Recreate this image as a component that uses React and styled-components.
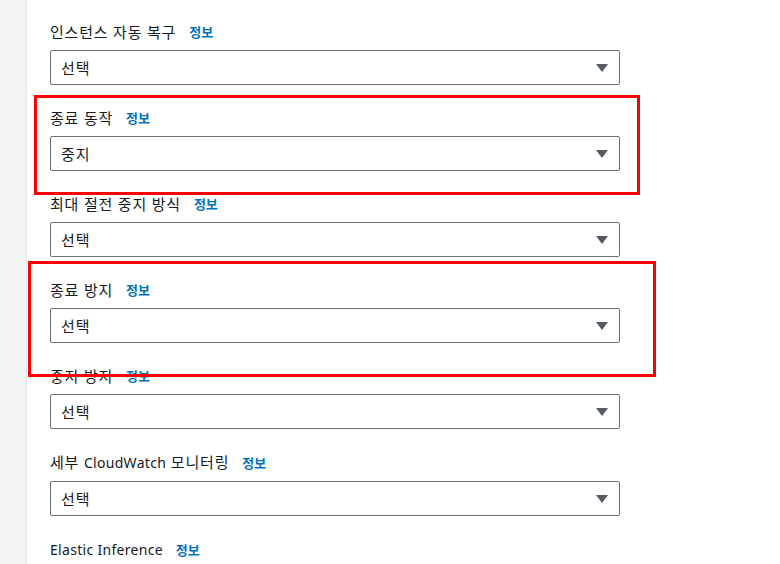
import React from 'react';
import styled, { createGlobalStyle } from 'styled-components';

const GlobalStyle = createGlobalStyle`
  html, body {
    margin: 0;
    padding: 0;
    background: #ffffff;
  }
  body {
    font-family: "Noto Sans", "Noto Sans CJK KR", sans-serif;
    color: #16191f;
  }
`;

const fields = [
  { id: 'recovery', label: '인스턴스 자동 복구', value: '선택' },
  { id: 'shutdown', label: '종료 동작', value: '중지' },
  { id: 'hibernate', label: '최대 절전 중지 방식', value: '선택' },
  { id: 'termination', label: '종료 방지', value: '선택' },
  { id: 'stop', label: '중지 방지', value: '선택' },
  {
    id: 'monitoring',
    label: (
      <>
        세부 <Latin>CloudWatch</Latin> 모니터링
      </>
    ),
    value: '선택',
  },
  { id: 'inference', label: <Latin>Elastic Inference</Latin>, value: null },
];

export default function App() {
  return (
    <>
      <GlobalStyle />
      <Page>
        <Sidebar />
        <Content>
          {fields.map((f) => (
            <Field key={f.id}>
              <Label>
                <span>{f.label}</span>
                <InfoLink>정보</InfoLink>
              </Label>
              {f.value && (
                <Select>
                  <SelectValue>{f.value}</SelectValue>
                  <Caret viewBox="0 0 12 8">
                    <path d="M0 0 L12 0 L6 8 Z" fill="#545b64" />
                  </Caret>
                </Select>
              )}
            </Field>
          ))}
          <Highlight $top={95} $left={34} $width={606} $height={100} />
          <Highlight $top={261} $left={28} $width={628} $height={116} />
        </Content>
      </Page>
    </>
  );
}

function Latin({ children }) {
  return <LatinText>{children}</LatinText>;
}

const Page = styled.div`
  display: flex;
  width: 780px;
  height: 564px;
  overflow: hidden;
`;

const Sidebar = styled.div`
  width: 26px;
  flex-shrink: 0;
  background: #f2f3f3;
  border-right: 1px solid #e4e6e6;
`;

const Content = styled.div`
  position: relative;
  flex: 1;
  padding: 21px 0 0 23px;
  display: flex;
  flex-direction: column;
  gap: 22px;
`;

const Field = styled.div`
  display: flex;
  flex-direction: column;
  gap: 7px;
  width: 570px;
`;

const Label = styled.div`
  font-size: 15px;
  line-height: 22px;
  color: #16191f;
  letter-spacing: 0.8px;
  display: flex;
  align-items: center;
  white-space: pre;
`;

const LatinText = styled.span`
  font-size: 14px;
  letter-spacing: 0.3px;
`;

const InfoLink = styled.a`
  margin-left: 13px;
  font-size: 13px;
  font-weight: 700;
  color: #0073bb;
  letter-spacing: 0;
  cursor: pointer;
`;

const Select = styled.div`
  box-sizing: border-box;
  height: 35px;
  border: 1px solid #687078;
  border-radius: 2px;
  display: flex;
  align-items: center;
  justify-content: space-between;
  padding: 0 11px 0 10px;
  background: #fff;
`;

const SelectValue = styled.span`
  font-size: 15px;
  color: #16191f;
  letter-spacing: 1px;
`;

const Caret = styled.svg`
  width: 12px;
  height: 8px;
`;

const Highlight = styled.div`
  position: absolute;
  box-sizing: border-box;
  top: ${(p) => p.$top}px;
  left: ${(p) => p.$left - 27}px;
  width: ${(p) => p.$width}px;
  height: ${(p) => p.$height}px;
  border: 3px solid #ff0000;
  pointer-events: none;
`;
